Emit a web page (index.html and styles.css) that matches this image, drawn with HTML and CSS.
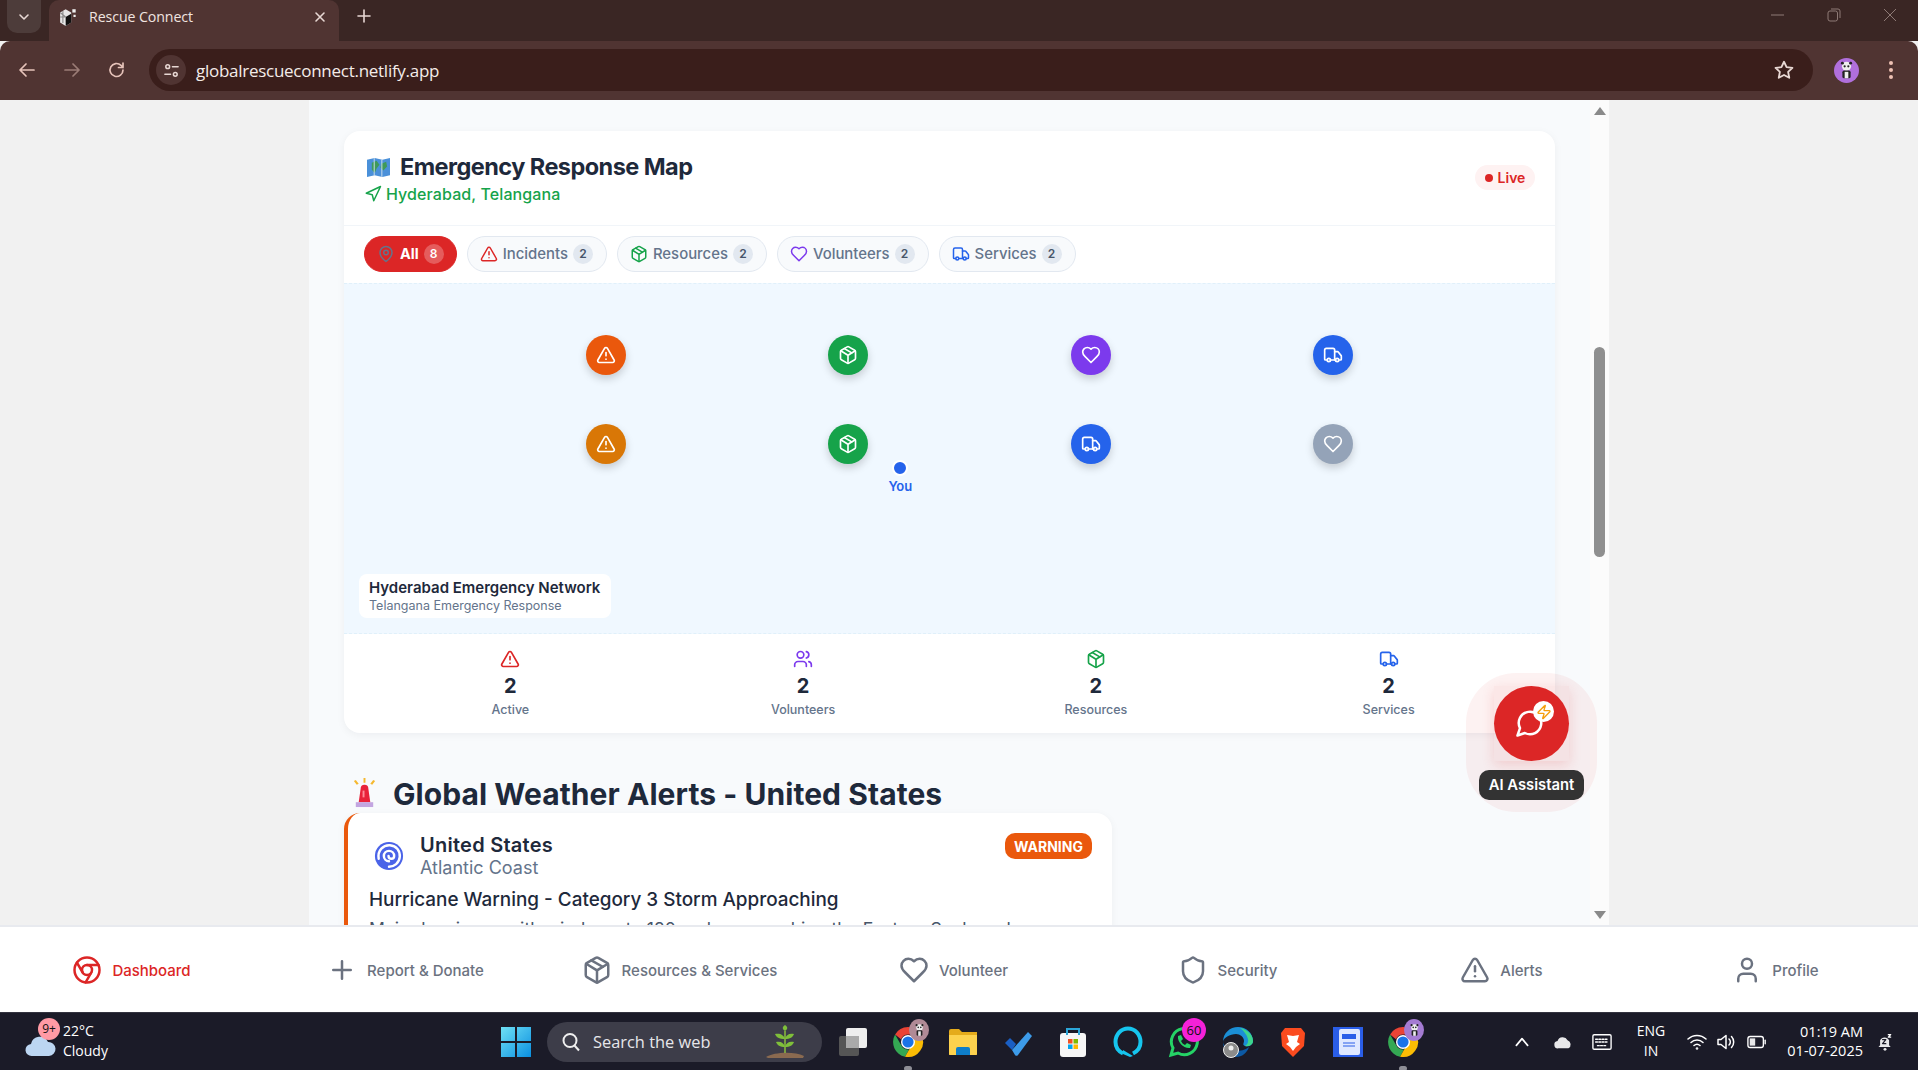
FILE: index.html
```html
<!DOCTYPE html>
<html lang="en">
<head>
<meta charset="utf-8">
<title>Rescue Connect</title>
<link rel="stylesheet" href="styles.css">
</head>
<body>
<svg class="defs" xmlns="http://www.w3.org/2000/svg">
  <symbol id="i-chrome" viewBox="0 0 24 24"><circle cx="12" cy="12" r="10"/><circle cx="12" cy="12" r="4"/><path d="M21.17 8H12M3.95 6.06 8.54 14M10.88 21.94 15.46 14"/></symbol>
  <symbol id="i-plus" viewBox="0 0 24 24"><path d="M5 12h14M12 5v14"/></symbol>
  <symbol id="i-package" viewBox="0 0 24 24"><path d="M11 21.73a2 2 0 0 0 2 0l7-4A2 2 0 0 0 21 16V8a2 2 0 0 0-1-1.73l-7-4a2 2 0 0 0-2 0l-7 4A2 2 0 0 0 3 8v8a2 2 0 0 0 1 1.73z"/><path d="M12 22V12"/><path d="m3.3 7 7.703 4.734a2 2 0 0 0 1.994 0L20.7 7"/><path d="m7.5 4.27 9 5.15"/></symbol>
  <symbol id="i-heart" viewBox="0 0 24 24"><path d="M19 14c1.49-1.46 3-3.21 3-5.5A5.5 5.5 0 0 0 16.5 3c-1.76 0-3 .5-4.5 2-1.5-1.5-2.74-2-4.5-2A5.5 5.5 0 0 0 2 8.5c0 2.3 1.5 4.05 3 5.5l7 7Z"/></symbol>
  <symbol id="i-shield" viewBox="0 0 24 24"><path d="M20 13c0 5-3.5 7.5-7.66 8.95a1 1 0 0 1-.67-.01C7.5 20.5 4 18 4 13V6a1 1 0 0 1 1-1c2 0 4.5-1.2 6.24-2.72a1.17 1.17 0 0 1 1.52 0C14.51 3.81 17 5 19 5a1 1 0 0 1 1 1z"/></symbol>
  <symbol id="i-alert" viewBox="0 0 24 24"><path d="m21.73 18-8-14a2 2 0 0 0-3.48 0l-8 14A2 2 0 0 0 4 21h16a2 2 0 0 0 1.73-3"/><path d="M12 9v4"/><path d="M12 17h.01"/></symbol>
  <symbol id="i-user" viewBox="0 0 24 24"><path d="M19 21v-2a4 4 0 0 0-4-4H9a4 4 0 0 0-4 4v2"/><circle cx="12" cy="7" r="4"/></symbol>
  <symbol id="i-users" viewBox="0 0 24 24"><path d="M16 21v-2a4 4 0 0 0-4-4H6a4 4 0 0 0-4 4v2"/><circle cx="9" cy="7" r="4"/><path d="M22 21v-2a4 4 0 0 0-3-3.87"/><path d="M16 3.13a4 4 0 0 1 0 7.75"/></symbol>
  <symbol id="i-truck" viewBox="0 0 24 24"><path d="M14 18V6a2 2 0 0 0-2-2H4a2 2 0 0 0-2 2v11a1 1 0 0 0 1 1h2"/><path d="M15 18H9"/><path d="M19 18h2a1 1 0 0 0 1-1v-3.65a1 1 0 0 0-.22-.624l-3.48-4.35A1 1 0 0 0 17.52 8H14"/><circle cx="17" cy="18" r="2"/><circle cx="7" cy="18" r="2"/></symbol>
  <symbol id="i-pin" viewBox="0 0 24 24"><path d="M20 10c0 6-8 12-8 12s-8-6-8-12a8 8 0 0 1 16 0Z"/><circle cx="12" cy="10" r="3"/></symbol>
  <symbol id="i-nav" viewBox="0 0 24 24"><polygon points="3 11 22 2 13 21 11 13 3 11"/></symbol>
  <symbol id="i-chat" viewBox="0 0 24 24"><path d="M7.9 20A9 9 0 1 0 4 16.1L2 22Z"/></symbol>
  <symbol id="i-zap" viewBox="0 0 24 24"><path d="M4 14a1 1 0 0 1-.78-1.63l9.9-10.2a.5.5 0 0 1 .86.46l-1.92 6.02A1 1 0 0 0 13 10h7a1 1 0 0 1 .78 1.63l-9.9 10.2a.5.5 0 0 1-.86-.46l1.92-6.02A1 1 0 0 0 11 14z"/></symbol>
  <symbol id="i-gchrome" viewBox="0 0 32 32">
    <path fill="#ea4335" d="M16 1a15 15 0 0 1 13 7.5H16a7.500 7.500 0 0 0-7 4.800L3.100 8.500A15 15 0 0 1 16 1z"/>
    <path fill="#34a853" d="M3.100 8.500 9.500 19.700a7.500 7.500 0 0 0 7.500 3.700L13 30.700A15 15 0 0 1 3.100 8.500z"/>
    <path fill="#fbbc04" d="M29 8.500a15 15 0 0 1-16 22.200l6.500-11.200A7.500 7.500 0 0 0 21 10.500z"/>
    <circle cx="16" cy="16" r="7" fill="#fff"/><circle cx="16" cy="16" r="5.600" fill="#1a73e8"/>
  </symbol>
  <symbol id="i-panda" viewBox="0 0 20 24">
    <circle cx="10" cy="8" r="5" fill="#eee"/><circle cx="5.500" cy="4.500" r="1.600" fill="#222"/><circle cx="14.500" cy="4.500" r="1.600" fill="#222"/>
    <circle cx="8" cy="8" r="1.200" fill="#222"/><circle cx="12" cy="8" r="1.200" fill="#222"/>
    <rect x="5.500" y="12.500" width="9" height="8.500" rx="2" fill="#222"/><rect x="8" y="14" width="4" height="7" fill="#eee"/>
  </symbol>
</svg>

<header class="tabstrip">
  <div class="tabsearch"><svg class="ic ic-s" viewBox="0 0 16 16"><path class="s-w" d="m4 6 4 4 4-4"/></svg></div>
  <div class="tab">
    <svg class="favicon" viewBox="0 0 18 18"><path fill="#e6e6e6" d="M1 5 6 2l5 3v9l-5 3-5-3z"/><path fill="#111" d="M6 9l5-3v8l-5 3z"/><path fill="none" stroke="#8a8a8a" d="M3.500 3.500v11M1 9l5 0M1 5l5 4"/><rect x="12" y="2" width="3" height="3" fill="#eee"/><rect x="13" y="7" width="2" height="2" fill="#eee"/></svg>
    <span class="tab-title">Rescue Connect</span>
    <svg class="tab-close" viewBox="0 0 12 12"><path class="s-w" d="m2 2 8 8M10 2l-8 8"/></svg>
  </div>
  <svg class="newtab" viewBox="0 0 14 14"><path class="s-w" d="M7 1v12M1 7h12"/></svg>
  <div class="winctl">
    <svg class="win" viewBox="0 0 14 14"><path d="M0 7h13"/></svg>
    <svg class="win" viewBox="0 0 14 14"><rect x="1" y="3" width="9.500" height="10" rx="2"/><path d="M4 1h7a2 2 0 0 1 2 2v7"/></svg>
    <svg class="win" viewBox="0 0 14 14"><path d="m1 1 12 12M13 1 1 13"/></svg>
  </div>
</header>

<div class="toolbar">
  <svg class="tb-ic" viewBox="0 0 20 20"><path class="s-p" d="M17 10H4m5-6-6 6 6 6"/></svg>
  <svg class="tb-ic dim" viewBox="0 0 20 20"><path class="s-p" d="M3 10h13m-5-6 6 6-6 6"/></svg>
  <svg class="tb-ic" viewBox="0 0 20 20"><path class="s-p" d="M16 10a6.500 6.500 0 1 1-2-4.700L16 7.500M16 3v4.500h-4.500"/></svg>
  <div class="omnibox">
    <div class="siteinfo"><svg viewBox="0 0 18 18"><circle class="s-w" cx="5" cy="5" r="2"/><path class="s-w" d="M10 5h6M2 13h6"/><circle class="s-w" cx="13" cy="13" r="2"/></svg></div>
    <span class="url">globalrescueconnect.netlify.app</span>
    <svg class="star" viewBox="0 0 24 24"><path d="m12 3 2.800 5.900 6.400.8-4.700 4.400 1.200 6.400L12 17.400l-5.700 3.100 1.200-6.400L2.800 9.700l6.400-.8z"/></svg>
  </div>
  <div class="avatar"><svg viewBox="0 0 20 24"><use href="#i-panda"/></svg></div>
  <div class="kebab"><i></i><i></i><i></i></div>
</div>

<div class="viewport">
  <div class="gutter"></div>
  <div class="panel">
    <main class="content">
      <section class="map-card">
        <div class="map-head">
          <div>
            <h1 class="map-title">
              <svg class="emoji" viewBox="0 0 26 24"><path fill="#4a90d9" d="M1 4l8-2 8 2 8-2v18l-8 2-8-2-8 2z"/><path fill="#3f9a5a" d="M6 7l5-2 3 4-3 4-2 5-3-4zM16 8l5-2 1 5-4 4-3-3z"/><path fill="#cfe0ee" d="M9 2v18l-1 .3V2.300zM17 4v18l-1-.3V3.700z"/></svg>
              Emergency Response Map
            </h1>
            <div class="map-loc"><svg class="ic ic-18 green" ><use href="#i-nav"/></svg>Hyderabad, Telangana</div>
          </div>
          <div class="live"><i></i>Live</div>
        </div>
        <div class="chips">
          <div class="chip active"><svg class="ic ic-18 slate"><use href="#i-pin"/></svg>All<b>8</b></div>
          <div class="chip"><svg class="ic ic-18 red"><use href="#i-alert"/></svg>Incidents<b>2</b></div>
          <div class="chip"><svg class="ic ic-18 green"><use href="#i-package"/></svg>Resources<b>2</b></div>
          <div class="chip"><svg class="ic ic-18 purple"><use href="#i-heart"/></svg>Volunteers<b>2</b></div>
          <div class="chip"><svg class="ic ic-18 blue"><use href="#i-truck"/></svg>Services<b>2</b></div>
        </div>
        <div class="map">
          <div class="pin c1 r1 orange-bg"><svg class="ic ic-20"><use href="#i-alert"/></svg></div>
          <div class="pin c2 r1 green-bg"><svg class="ic ic-20"><use href="#i-package"/></svg></div>
          <div class="pin c3 r1 purple-bg"><svg class="ic ic-20"><use href="#i-heart"/></svg></div>
          <div class="pin c4 r1 blue-bg"><svg class="ic ic-20"><use href="#i-truck"/></svg></div>
          <div class="pin c1 r2 amber-bg"><svg class="ic ic-20"><use href="#i-alert"/></svg></div>
          <div class="pin c2 r2 green-bg"><svg class="ic ic-20"><use href="#i-package"/></svg></div>
          <div class="pin c3 r2 blue-bg"><svg class="ic ic-20"><use href="#i-truck"/></svg></div>
          <div class="pin c4 r2 grey-bg"><svg class="ic ic-20"><use href="#i-heart"/></svg></div>
          <div class="you"><i></i><span>You</span></div>
          <div class="network">
            <strong>Hyderabad Emergency Network</strong>
            <span>Telangana Emergency Response</span>
          </div>
        </div>
        <div class="stats">
          <div class="stat"><svg class="ic ic-20 red"><use href="#i-alert"/></svg><b>2</b><span>Active</span></div>
          <div class="stat"><svg class="ic ic-20 purple"><use href="#i-users"/></svg><b>2</b><span>Volunteers</span></div>
          <div class="stat"><svg class="ic ic-20 green"><use href="#i-package"/></svg><b>2</b><span>Resources</span></div>
          <div class="stat"><svg class="ic ic-20 blue"><use href="#i-truck"/></svg><b>2</b><span>Services</span></div>
        </div>
      </section>

      <h2 class="alerts-title">
        <svg class="siren" viewBox="0 0 30 32"><path fill="#f5b82e" d="M14 0h2v5h-2zM4 3l2-1 3 4-2 1zM26 3l-2-1-3 4 2 1z"/><path fill="#e8223a" d="M9 25l2-14a4 4 0 0 1 8 0l2 14z"/><path fill="#ff8a96" d="M13 13h2v7h-2z"/><path fill="#c3a5e0" d="M6 25h18v5H6z"/></svg>
        Global Weather Alerts - United States
      </h2>
      <article class="alert-card">
        <div class="alert-top">
          <svg class="swirl" viewBox="0 0 32 32"><circle cx="16" cy="16" r="15" fill="#4a63e8"/><path d="M16 21.500a5.500 5.500 0 1 1 5.500-5.500c0 1.800-1.200 3-3 3a3 3 0 0 1-3-3M5 19C3.500 10 10 4 17 4.500c7 .5 11 6 10.500 12.500-.5 6.500-6 10.500-11.500 10.500" fill="none" stroke="#fff" stroke-width="2.600" stroke-linecap="round"/></svg>
          <div class="alert-place">
            <strong>United States</strong>
            <span>Atlantic Coast</span>
          </div>
          <div class="badge">WARNING</div>
        </div>
        <h3 class="alert-head">Hurricane Warning - Category 3 Storm Approaching</h3>
        <p class="alert-body">Major hurricane with winds up to 120 mph approaching the Eastern Seaboard.</p>
      </article>
    </main>
    <div class="scrollbar">
      <i class="arrow up"></i>
      <div class="thumb"></div>
      <i class="arrow down"></i>
    </div>
    <div class="fab">
      <div class="fab-box">
        <div class="fab-circle">
          <svg class="ic fab-chat"><use href="#i-chat"/></svg>
          <div class="fab-zap"><svg class="ic ic-16 amber"><use href="#i-zap"/></svg></div>
        </div>
      </div>
      <div class="fab-label">AI Assistant</div>
    </div>
  </div>
  <div class="gutter"></div>
</div>

<nav class="bottomnav">
  <a class="nav-item active"><svg class="ic ic-30"><use href="#i-chrome"/></svg>Dashboard</a>
  <a class="nav-item"><svg class="ic ic-30"><use href="#i-plus"/></svg>Report &amp; Donate</a>
  <a class="nav-item"><svg class="ic ic-30"><use href="#i-package"/></svg>Resources &amp; Services</a>
  <a class="nav-item"><svg class="ic ic-30"><use href="#i-heart"/></svg>Volunteer</a>
  <a class="nav-item"><svg class="ic ic-30"><use href="#i-shield"/></svg>Security</a>
  <a class="nav-item"><svg class="ic ic-30"><use href="#i-alert"/></svg>Alerts</a>
  <a class="nav-item"><svg class="ic ic-30"><use href="#i-user"/></svg>Profile</a>
</nav>

<footer class="taskbar">
  <div class="tb-left">
    <div class="weather-icon">
      <svg viewBox="0 0 32 26"><path fill="#bcd6f2" d="M8 25a6 6 0 0 1-1-12 9 9 0 0 1 17-2 7 7 0 0 1 1 14z"/></svg>
      <span class="wbadge">9+</span>
    </div>
    <div class="weather-text"><span>22°C</span><span>Cloudy</span></div>
  </div>
  <div class="tb-center">
    <svg class="winlogo" viewBox="0 0 30 30"><defs><linearGradient id="wg" x1="0" y1="0" x2="1" y2="1"><stop offset="0" stop-color="#6fe0f5"/><stop offset="1" stop-color="#0a8fe0"/></linearGradient></defs><path fill="url(#wg)" d="M0 0h14v14H0zM16 0h14v14H16zM0 16h14v14H0zM16 16h14v14H16z"/></svg>
    <div class="searchbox">
      <svg class="search-ic" viewBox="0 0 20 20"><circle cx="9" cy="8.500" r="6.500"/><path d="m13.500 13.500 4.500 5"/></svg>
      <span>Search the web</span>
      <svg class="plant" viewBox="0 0 44 34"><path fill="#8a6a50" d="M4 32c8-5 28-6 38-1l-1 2H6z"/><path stroke="#8bbf3c" stroke-width="1.500" fill="none" d="M23 28V6"/><path fill="#7fbf3a" d="M23 6c-3-2-3-4 0-6 3 2 3 4 0 6zM23 14c-6 0-9-2-10-5 5-1 9 1 10 5zM23 14c5 0 8-2 9-5-5-1-8 1-9 5zM23 22c-5 0-8-2-9-5 5-1 8 1 9 5zM23 22c5 0 8-2 9-5-5-1-8 1-9 5z"/></svg>
    </div>
    <div class="apps">
      <div class="app"><svg viewBox="0 0 32 32"><rect x="2" y="10" width="20" height="20" rx="2" fill="#555"/><rect x="9" y="2" width="21" height="20" rx="2" fill="#eee"/><rect x="9" y="10" width="13" height="12" fill="#aaa"/></svg></div>
      <div class="app running"><svg viewBox="0 0 32 32"><use href="#i-gchrome"/></svg><span class="app-av pink"><svg viewBox="0 0 20 24"><use href="#i-panda"/></svg></span></div>
      <div class="app"><svg viewBox="0 0 32 32"><path fill="#e5ab1b" d="M2 5a2 2 0 0 1 2-2h8l3 3h15v22a1 1 0 0 1-1 1H3a1 1 0 0 1-1-1z"/><path fill="#fdd24e" d="M2 9h28v19a1 1 0 0 1-1 1H3a1 1 0 0 1-1-1z"/><path fill="#0e7ec9" d="M9 23a2 2 0 0 1 2-2h10a2 2 0 0 1 2 2v6H9z"/></svg></div>
      <div class="app"><svg viewBox="0 0 32 32"><path fill="#1a5fc4" d="M3 17l5-5 6 6-4 6z"/><path fill="#3d9be9" d="M10 24 26 6l4 4-14 19a2 2 0 0 1-3 0z"/></svg></div>
      <div class="app"><svg viewBox="0 0 32 32"><rect x="3" y="7" width="26" height="24" rx="3" fill="#f6f6f6"/><path fill="none" stroke="#2ba6d8" stroke-width="2" d="M10 9V3h12v6"/><path fill="#f25022" d="M11 13h4.500v4.500H11z"/><path fill="#7fba00" d="M16.500 13H21v4.500h-4.500z"/><path fill="#00a4ef" d="M11 18.500h4.500V23H11z"/><path fill="#ffb900" d="M16.500 18.500H21V23h-4.500z"/></svg></div>
      <div class="app"><svg viewBox="0 0 32 32"><path fill="none" stroke="#16c5ee" stroke-width="4" d="M11 27.500C6 25 3.500 21 3.500 16a12.500 13.500 0 0 1 25 0c0 5-2.500 9-7.500 11.500"/><path fill="#16c5ee" d="M11 24l10 6-3 1-7-3z"/></svg></div>
      <div class="app"><svg viewBox="0 0 32 32"><path fill="none" stroke="#25d366" stroke-width="3" d="M4 29l2-7a13 13 0 1 1 5 5z"/><path fill="#25d366" d="M11 10l3-1 2 4-2 2c1 2 2 3 4 4l2-2 4 2-1 3c-6 1-13-6-12-12z"/></svg><span class="app-badge">60</span></div>
      <div class="app"><svg viewBox="0 0 32 32"><path fill="#1b8fd6" d="M1 16C1 7 8 1 16 1c8 0 15 6 15 14 0 4-4 6-8 5-3-1-1-3-1-5 0-4-4-7-8-7-6 0-13 4-13 8z"/><path fill="#3dd68c" d="M18 2c6 1 13 6 13 13 0 3-3 6-8 5 6-3 3-12-5-18z"/><path fill="#0c59a4" d="M14 31C8 30 1 24 1 16c1 4 5 10 13 9 4 0 9-1 13-4-2 6-7 10-13 10z"/><circle cx="9" cy="24" r="7.500" fill="#8b8b8b" stroke="#eee"/><circle cx="9" cy="22" r="2.500" fill="#eee"/></svg></div>
      <div class="app"><svg viewBox="0 0 32 32"><path fill="#fb4b1f" d="M8 2h16l4 5-1 13-11 11L5 20 4 7z"/><path fill="#fff" d="M10 9l6 1 6-1-2 7 3 2-4 3-3 4-3-4-4-3 3-2z"/></svg></div>
      <div class="app"><svg viewBox="0 0 32 32"><rect x="1" y="1" width="30" height="30" fill="#2a5ee8"/><rect x="7" y="3" width="21" height="26" rx="2" fill="#dfe8ff"/><rect x="10" y="8" width="14" height="5" fill="#2a5ee8"/><path stroke="#2a5ee8" d="M11 17h12M11 20h12"/></svg></div>
      <div class="app running"><svg viewBox="0 0 32 32"><use href="#i-gchrome"/></svg><span class="app-av lilac"><svg viewBox="0 0 20 24"><use href="#i-panda"/></svg></span></div>
    </div>
  </div>
  <div class="tb-right">
    <svg class="tray wide" viewBox="0 0 16 16"><path d="m3 11 5-6 5 6"/></svg>
    <svg class="tray" viewBox="0 0 22 16"><path class="fill-w" d="M6 15a4 4 0 0 1-1-8 6 6 0 0 1 11-1 5 5 0 0 1 1 9z"/></svg>
    <svg class="tray" viewBox="0 0 22 18"><rect x="1" y="1" width="20" height="16" rx="1.500"/><path stroke-dasharray="2 1.500" d="M4 6h14M4 9h14M6 13h10"/></svg>
    <div class="lang"><span>ENG</span><span>IN</span></div>
    <svg class="tray tight" viewBox="0 0 20 18"><path d="M1 6a13 13 0 0 1 18 0M4 9.500a8.500 8.500 0 0 1 12 0M7 12.500a4.500 4.500 0 0 1 6 0"/><circle class="fill-w" cx="10" cy="15.500" r="1.300"/></svg>
    <svg class="tray tight" viewBox="0 0 20 18"><path d="M1 6.500v5h3l5 4v-13l-5 4zM12 6a4 4 0 0 1 0 6M14.500 3.500a8 8 0 0 1 0 11"/></svg>
    <svg class="tray" viewBox="0 0 22 14"><rect x="1" y="1" width="17" height="12" rx="2.500"/><rect class="fill-w" x="3" y="3" width="6" height="8"/><path d="M20 5v4"/></svg>
    <div class="clock"><span>01:19 AM</span><span>01-07-2025</span></div>
    <svg class="tray bell" viewBox="0 0 18 22"><path class="fill-w" d="M3 15V9a6 6 0 0 1 11 0v6l2 2H1z"/><circle class="fill-w" cx="9" cy="20" r="1.800"/><path stroke="#1b1b28" d="M6 8h4l-4 5h4"/><path d="M13 2h3l-3 3h3"/></svg>
  </div>
</footer>
</body>
</html>
```

FILE: styles.css
```css
* { box-sizing: border-box; }
html, body { margin: 0; height: 100%; }
body {
  width: 1918px;
  height: 1070px;
  overflow: hidden;
  display: flex;
  flex-direction: column;
  font-family: Inter, "Liberation Sans", sans-serif;
  color: #1e293b;
  background: #f1f1f1;
}
.defs { display: block; width: 0; height: 0; flex: none; }
.ic { fill: none; stroke: currentColor; stroke-width: 2; stroke-linecap: round; stroke-linejoin: round; flex: none; display: block; }
.ic-s { width: 16px; height: 16px; }
.ic-16 { width: 16px; height: 16px; }
.ic-18 { width: 18px; height: 18px; }
.ic-20 { width: 20px; height: 20px; }
.ic-30 { width: 30px; height: 30px; stroke-width: 2; }
.red { color: #dc2626; }
.green { color: #16a34a; }
.purple { color: #7c3aed; }
.blue { color: #2563eb; }
.slate { color: #64748b; }
.amber { color: #f59e0b; }
.s-w { fill: none; stroke: #e8d8d4; stroke-width: 1.6; stroke-linecap: round; stroke-linejoin: round; }
.s-p { fill: none; stroke: #e6c3ba; stroke-width: 1.7; stroke-linecap: round; stroke-linejoin: round; }

/* browser chrome */
.tabstrip { height: 41px; flex: none; background: #3a2624; display: flex; align-items: flex-start; position: relative; }
.tabsearch { width: 34px; height: 33px; margin-left: 7px; background: #4d3c3a; border-radius: 0 0 10px 10px; display: flex; align-items: center; justify-content: center; }
.tab { width: 290px; height: 41px; margin-left: 8px; background: #503432; border-radius: 10px 10px 0 0; display: flex; align-items: center; padding: 0 13px 8px 10px; font-family: "Open Sans", sans-serif; font-size: 14.2px; color: #f0e4e0; }
.favicon { width: 20px; height: 20px; flex: none; }
.tab-title { margin-left: 10px; letter-spacing: -0.1px; flex: 1; }
.tab-close { width: 12px; height: 12px; }
.newtab { width: 14px; height: 14px; margin: 9px 0 0 18px; }
.winctl { margin-left: auto; display: flex; gap: 42px; padding: 8px 21px 0 0; }
.win { width: 14px; height: 14px; fill: none; stroke: #8e7a76; stroke-width: 1; }
.toolbar { height: 59px; flex: none; background: #503432; display: flex; align-items: center; padding: 0 0 1px 17px; border-radius: 10px 10px 0 0; }
.tb-ic { width: 20px; height: 20px; margin-right: 25px; flex: none; }
.tb-ic.dim { opacity: .5; }
.omnibox { width: 1664px; height: 42px; margin-left: -3px; background: #3a1e1b; border-radius: 21px; display: flex; align-items: center; padding: 0 13px 0 7px; }
.siteinfo { width: 30px; height: 30px; border-radius: 50%; background: #503432; display: flex; align-items: center; justify-content: center; }
.siteinfo svg { width: 17px; height: 17px; }
.url { margin-left: 10px; font-family: "Open Sans", sans-serif; font-size: 17px; letter-spacing: -0.27px; color: #f4ece9; flex: 1; }
.star { width: 22px; height: 22px; fill: none; stroke: #e8d8d4; stroke-width: 2; stroke-linejoin: round; margin-right: 5px; }
.avatar { width: 25px; height: 25px; margin-left: 21px; border-radius: 50%; background: #b06fdc; display: flex; align-items: center; justify-content: center; flex: none; }
.avatar svg { width: 19px; height: 22px; }
.kebab { margin-left: 30px; display: flex; flex-direction: column; gap: 3px; }
.kebab i { width: 4px; height: 4px; border-radius: 50%; background: #eec1b4; display: block; }

/* viewport */
.viewport { height: 825px; flex: none; display: grid; grid-template-columns: 309px 1300px 309px; background: #f1f1f1; }
.panel { position: relative; background: #f8fafc; display: flex; overflow: hidden; }
.content { width: 1281px; flex: none; padding: 31px 35px 0 35px; }
.scrollbar { width: 19px; flex: none; background: #fbfbfb; display: flex; flex-direction: column; align-items: center; padding: 7px 0 6px; }
.arrow { display: block; width: 0; height: 0; border-left: 6.5px solid transparent; border-right: 6.500px solid transparent; flex: none; }
.arrow.up { border-bottom: 8px solid #8a8a8a; }
.arrow.down { border-top: 8px solid #8a8a8a; margin-top: auto; }
.thumb { width: 11px; height: 210px; margin-top: 232px; background: #8f8f8f; border-radius: 6px; }

/* map card */
.map-card { background: #fff; border-radius: 16px; box-shadow: 0 2px 8px rgba(15, 23, 42, .05); overflow: hidden; }
.map-head { height: 95px; padding: 19px 20px 0 22px; display: flex; justify-content: space-between; border-bottom: 1px solid #f1f5f9; }
.map-title { margin: 0; display: flex; align-items: center; gap: 9px; font-size: 23.5px; line-height: 34px; font-weight: 700; letter-spacing: -0.55px; color: #1e293b; }
.emoji { width: 25px; height: 23px; flex: none; }
.map-loc { display: flex; align-items: center; gap: 4px; margin-top: -2px; margin-left: -2px; font-size: 16px; line-height: 24px; font-weight: 500; letter-spacing: 0.1px; color: #16a34a; }
.live { align-self: flex-start; margin-top: 15px; height: 25px; width: 60px; background: #fef2f2; border-radius: 13px; display: flex; align-items: center; justify-content: center; gap: 5px; color: #dc2626; font-size: 14px; font-weight: 600; }
.live i { width: 8px; height: 8px; border-radius: 50%; background: #dc2626; }
.chips { height: 57px; padding: 10px 20px; display: flex; gap: 10px; align-items: flex-start; }
.chip { height: 36px; padding: 0 13px 1px 12px; border-radius: 18px; border: 1px solid #e2e8f0; background: #f8fafc; display: flex; align-items: center; gap: 5px; font-size: 14.9px; font-weight: 500; color: #64748b; }
.chip b { min-width: 20px; height: 20px; border-radius: 10px; background: #e2e8f0; font-size: 12px; font-weight: 600; color: #475569; display: flex; align-items: center; justify-content: center; }
.chip.active { background: #dc2626; border-color: #dc2626; color: #fff; font-size: 14.5px; font-weight: 700; padding-right: 12px; }
.chip.active b { background: rgba(255, 255, 255, .25); color: #fff; }
.map { position: relative; height: 351px; background: #f0f8ff; border-top: 1px dashed #e0f0fa; border-bottom: 1px dashed #e0f0fa; }
.pin { position: absolute; width: 40px; height: 40px; border-radius: 50%; display: flex; align-items: center; justify-content: center; color: #fff; box-shadow: 0 4px 8px rgba(0, 0, 0, .18); }
.c1 { left: 20%; } .c2 { left: 40%; } .c3 { left: 60%; } .c4 { left: 80%; }
.r1 { top: 14.7%; } .r2 { top: 40%; }
.orange-bg { background: #ea580c; }
.amber-bg { background: #d97706; }
.green-bg { background: #16a34a; }
.purple-bg { background: #7c3aed; }
.blue-bg { background: #2563eb; }
.grey-bg { background: #94a3b8; }
.you { position: absolute; left: 44.7%; top: 50.5%; display: flex; flex-direction: column; align-items: center; width: 30px; font-size: 13px; font-weight: 600; color: #2563eb; }
.you i { width: 16px; height: 16px; background: #2563eb; border: 2px solid #fff; border-radius: 50%; display: block; }
.you span { line-height: 16px; margin-top: 2px; }
.network { position: absolute; left: 15px; bottom: 15px; width: 252px; height: 44px; background: #fff; border-radius: 8px; padding: 5px 10px; display: flex; flex-direction: column; white-space: nowrap; }
.network strong { font-size: 15px; line-height: 18px; font-weight: 600; color: #1e293b; }
.network span { font-size: 12.5px; line-height: 16px; margin-top: 1px; color: #64748b; }
.stats { height: 99px; padding: 0 20px; display: grid; grid-template-columns: repeat(4, 1fr); }
.stat { display: flex; flex-direction: column; align-items: center; padding-top: 15px; }
.stat b { font-size: 20px; line-height: 24px; margin-top: 5px; font-weight: 700; color: #1e293b; }
.stat span { font-size: 12.5px; line-height: 16px; margin-top: 4px; color: #64748b; font-weight: 500; }

/* alerts */
.alerts-title { margin: 42px 0 0 6px; height: 37px; display: flex; align-items: center; gap: 14px; font-size: 30px; line-height: 36px; font-weight: 700; color: #1e293b; letter-spacing: 0.06px; }
.siren { width: 29px; height: 31px; flex: none; }
.alert-card { width: 768px; height: 300px; margin-top: 1px; background: #fff; border-left: 4px solid #ea580c; border-radius: 16px; padding: 20px 20px 0 21px; box-shadow: 0 2px 8px rgba(15, 23, 42, .05); }
.alert-top { display: flex; align-items: flex-start; }
.swirl { width: 30px; height: 30px; margin: 8px 0 0 5px; flex: none; }
.alert-place { display: flex; flex-direction: column; margin-left: 16px; flex: 1; }
.alert-place strong { font-size: 20px; line-height: 24px; font-weight: 600; letter-spacing: 0.25px; color: #1e293b; }
.alert-place span { font-size: 18px; line-height: 22px; color: #64748b; }
.badge { height: 26px; width: 87px; background: #ea580c; color: #fff; font-size: 14px; font-weight: 700; border-radius: 10px; display: flex; align-items: center; justify-content: center; }
.alert-head { margin: 7px 0 0; font-size: 18.9px; line-height: 28px; font-weight: 500; color: #1e293b; }
.alert-body { margin: 2px 0 0; font-size: 17.6px; line-height: 26px; color: #475569; white-space: nowrap; }

/* floating assistant */
.fab { position: absolute; right: 12px; top: 573px; width: 131px; height: 139px; border-radius: 50px; background: rgba(220, 38, 38, .06); display: flex; flex-direction: column; align-items: center; padding-top: 13px; }
.fab-box { width: 75px; height: 75px; background: rgba(220, 38, 38, .05); box-shadow: 0 4px 12px rgba(220, 38, 38, .16); }
.fab-circle { position: relative; width: 75px; height: 75px; border-radius: 50%; background: #dc2626; display: flex; align-items: center; justify-content: center; color: #fff; }
.fab-chat { width: 30px; height: 30px; margin: 0 4px 1px 0; }
.fab-zap { position: absolute; left: 39px; top: 15px; width: 21px; height: 21px; border-radius: 50%; background: #fff; display: flex; align-items: center; justify-content: center; }
.fab-label { margin-top: 9px; width: 105px; height: 30px; border-radius: 10px; background: #333; color: #fff; font-size: 14.8px; font-weight: 600; display: flex; align-items: center; justify-content: center; }

/* bottom nav */
.bottomnav { height: 87px; flex: none; background: #fff; border-top: 2px solid #e8eaef; display: grid; grid-template-columns: repeat(7, 1fr); padding-top: 1px; }
.nav-item { display: flex; align-items: center; justify-content: center; gap: 10px; padding-right: 11px; font-size: 15px; font-weight: 500; color: #6b7280; }
.nav-item.active { color: #dc2626; }

/* taskbar */
.taskbar { height: 58px; flex: none; background: #1b1b28; border-top: 1px solid #33333f; display: flex; align-items: center; color: #fff; font-family: "Open Sans", sans-serif; font-size: 14px; }
.tb-left { width: 501px; flex: none; display: flex; align-items: center; padding-left: 24px; }
.weather-icon { position: relative; width: 32px; height: 26px; margin-top: 4px; }
.weather-icon svg { width: 32px; height: 26px; display: block; }
.wbadge { position: absolute; left: 14px; top: -13px; width: 22px; height: 22px; border-radius: 50%; background: #ff9aa5; color: #111; font-size: 12px; display: flex; align-items: center; justify-content: center; }
.weather-text { display: flex; flex-direction: column; margin: 0 0 2px 7px; line-height: 20px; font-size: 14px; }
.tb-center { flex: none; display: flex; align-items: center; }
.winlogo { width: 30px; height: 30px; }
.searchbox { width: 275px; height: 40px; margin-left: 16px; border-radius: 20px; background: #3d3d49; display: flex; align-items: center; padding-left: 14px; color: #e6e6ea; font-size: 16.4px; }
.search-ic { width: 20px; height: 20px; fill: none; stroke: #eee; stroke-width: 2; }
.searchbox span { margin-left: 12px; flex: 1; }
.plant { width: 44px; height: 34px; margin-right: 16px; }
.apps { display: flex; gap: 23px; margin-left: 15px; }
.app { position: relative; width: 32px; height: 32px; flex: none; }
.app > svg { width: 32px; height: 32px; display: block; }
.app.running::after { content: ""; position: absolute; left: 12px; top: 40px; width: 8px; height: 5px; border-radius: 3px; background: #8e8e96; }
.app-av { position: absolute; right: -5px; top: -7px; width: 20px; height: 22px; border-radius: 50%; display: flex; align-items: center; justify-content: center; }
.app-av svg { width: 13px; height: 16px; }
.app-av.pink { background: #b08a96; }
.app-av.lilac { background: #a47bd2; }
.app-badge { position: absolute; right: -7px; top: -8px; width: 24px; height: 24px; border-radius: 50%; background: #f521d8; color: #111; font-size: 13px; display: flex; align-items: center; justify-content: center; }
.tb-right { flex: 1; display: flex; align-items: center; padding-left: 93px; }
.tray { width: 20px; height: 18px; fill: none; stroke: #fff; stroke-width: 1.500; stroke-linecap: round; stroke-linejoin: round; flex: none; margin-right: 19px; }
.tray.wide { margin-right: 21px; }
.tray.tight { margin-right: 10px; }
.tray .fill-w, .fill-w { fill: #e8e8ea; stroke: none; }
.lang { width: 40px; margin: 0 16px 2px 0; display: flex; flex-direction: column; align-items: center; line-height: 20px; font-size: 14px; }
.clock { margin: 0 0 2px -23px; width: 100px; display: flex; flex-direction: column; align-items: flex-end; line-height: 19px; font-size: 14.5px; }
.bell { margin: 0 0 0 12px; }
```
